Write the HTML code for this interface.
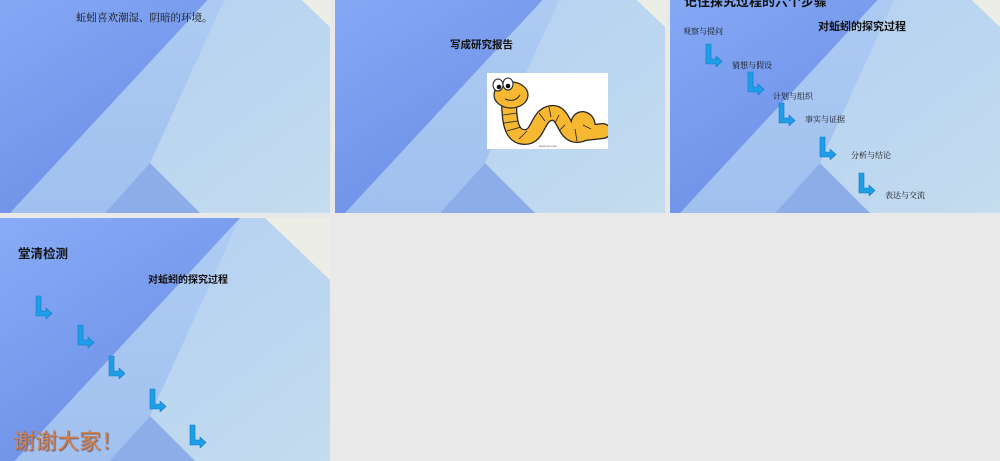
<!DOCTYPE html>
<html><head><meta charset="utf-8"><style>
body{margin:0;width:1000px;height:461px;background:#e9e9e9;position:relative;overflow:hidden;font-family:"Liberation Sans","Noto Sans CJK SC",sans-serif}
.s{position:absolute;width:330px;overflow:hidden}
.s svg.bg{position:absolute;left:0;width:330px;height:248px}
.t{position:absolute;white-space:nowrap;color:#111}
.serif{font-family:"Liberation Serif","Noto Serif CJK SC",serif}
.ar{position:absolute;width:20px;height:24px}
</style></head><body>
<svg width="0" height="0" style="position:absolute"><defs>
<linearGradient id="dk" x1="0" y1="0" x2="0.6" y2="1"><stop offset="0" stop-color="#88acf6"/><stop offset="1" stop-color="#6a8de6"/></linearGradient>
<linearGradient id="lt" x1="0" y1="0" x2="1" y2="1"><stop offset="0" stop-color="#aecdf3"/><stop offset="1" stop-color="#c4dcee"/></linearGradient>
<linearGradient id="md" x1="0" y1="0" x2="0" y2="1"><stop offset="0" stop-color="#afcdf3"/><stop offset="1" stop-color="#a0c0ef"/></linearGradient>
<symbol id="bgs" viewBox="0 0 330 248">
<rect width="330" height="248" fill="url(#lt)"/>
<polygon points="240,0 150,198 105,248 10,248" fill="url(#md)"/>
<polygon points="0,0 240,0 10,248 0,248" fill="url(#dk)"/>
<polygon points="150,198 200,248 105,248" fill="#8dade9"/>
<polygon points="265,0 330,0 330,62" fill="#ecede4"/>
</symbol>
<symbol id="arr" viewBox="0 0 20 24"><path d="M2 1H7V16H12V13L18 18.5L12 24V21H2Z" fill="#1d9ee6" stroke="#1478c8" stroke-width=".6"/></symbol>
</defs></svg>

<div class="s" style="left:0;top:0;height:213px"><svg class="bg" style="top:-35px"><use href="#bgs"/></svg>
<div class="t serif" style="left:76px;top:10px;font-size:10.5px">蚯蚓喜欢潮湿、阴暗的环境。</div></div>

<div class="s" style="left:335px;top:0;height:213px"><svg class="bg" style="top:-35px"><use href="#bgs"/></svg>
<div class="t" style="left:115px;top:37px;font-size:10.5px;font-weight:bold">写成研究报告</div>
<svg style="position:absolute;left:152px;top:73px" width="121" height="76" viewBox="0 0 121 76">
<rect width="121" height="76" fill="#fff"/>
<g fill="none" stroke-linecap="round" stroke-linejoin="round">
<path d="M22 26 C22 48 24 64 38 64 C52 64 50 42 64 40 C78 38 76 62 90 62 C102 62 104 48 96 46 C90 46 90 54 96 56 M98 60 L116 58" stroke="#222" stroke-width="16"/>
<path d="M22 26 C22 48 24 64 38 64 C52 64 50 42 64 40 C78 38 76 62 90 62 C102 62 104 48 96 46 C90 46 90 54 96 56 M98 60 L116 58" stroke="#f6b830" stroke-width="13.5"/>
</g>
<ellipse cx="24" cy="22" rx="17" ry="13" fill="#f6b830" stroke="#222" stroke-width="1.2"/>
<ellipse cx="11" cy="12" rx="5" ry="6" fill="#fff" stroke="#222"/><ellipse cx="21" cy="11" rx="5" ry="6" fill="#fff" stroke="#222"/>
<circle cx="12" cy="14" r="2.3" fill="#111"/><circle cx="21" cy="13" r="2.3" fill="#111"/>
<path d="M18 26 Q28 30 33 22" fill="none" stroke="#222"/>
<g stroke="#222" stroke-width=".8" fill="none"><path d="M16 42 L30 40M17 50 L31 48M20 58 L34 54M32 66 L40 58M52 40 L58 48M62 34 L64 44M72 42 L68 50M78 52 L72 58M88 56 L90 68M96 52 L104 56"/></g>
<text x="52" y="74" font-size="3" fill="#555">www.xxx.com</text>
</svg></div>

<div class="s" style="left:670px;top:0;height:213px"><svg class="bg" style="top:-35px"><use href="#bgs"/></svg>
<div class="t" style="left:14px;top:-9px;font-size:13px;font-weight:bold">记住探究过程的六个步骤</div>
<div class="t" style="left:148px;top:18px;font-size:11px;font-weight:bold">对蚯蚓的探究过程</div>
<div class="t serif" style="left:13px;top:26px;font-size:8px">观察与提问</div>
<div class="t serif" style="left:62px;top:60px;font-size:8px">猜想与假设</div>
<div class="t serif" style="left:103px;top:91px;font-size:8px">计划与组织</div>
<div class="t serif" style="left:135px;top:114px;font-size:8px">事实与证据</div>
<div class="t serif" style="left:181px;top:150px;font-size:8px">分析与结论</div>
<div class="t serif" style="left:215px;top:190px;font-size:8px">表达与交流</div>
<svg class="ar" style="left:34px;top:43px"><use href="#arr"/></svg>
<svg class="ar" style="left:76px;top:71px"><use href="#arr"/></svg>
<svg class="ar" style="left:107px;top:102px"><use href="#arr"/></svg>
<svg class="ar" style="left:148px;top:136px"><use href="#arr"/></svg>
<svg class="ar" style="left:187px;top:172px"><use href="#arr"/></svg>
</div>

<div class="s" style="left:0;top:218px;height:243px"><svg class="bg" style="top:0"><use href="#bgs"/></svg>
<div class="t" style="left:18px;top:25px;font-size:12.5px;font-weight:bold">堂清检测</div>
<div class="t" style="left:148px;top:53px;font-size:10px;font-weight:bold">对蚯蚓的探究过程</div>
<svg class="ar" style="left:34px;top:77px"><use href="#arr"/></svg>
<svg class="ar" style="left:76px;top:106px"><use href="#arr"/></svg>
<svg class="ar" style="left:107px;top:137px"><use href="#arr"/></svg>
<svg class="ar" style="left:148px;top:170px"><use href="#arr"/></svg>
<svg class="ar" style="left:188px;top:206px"><use href="#arr"/></svg>
<div class="t" style="left:13px;top:206px;font-size:22px;color:#d2834c;text-shadow:1px 1px 1px #7a5a60">谢谢大家！</div>
</div>
</body></html>
